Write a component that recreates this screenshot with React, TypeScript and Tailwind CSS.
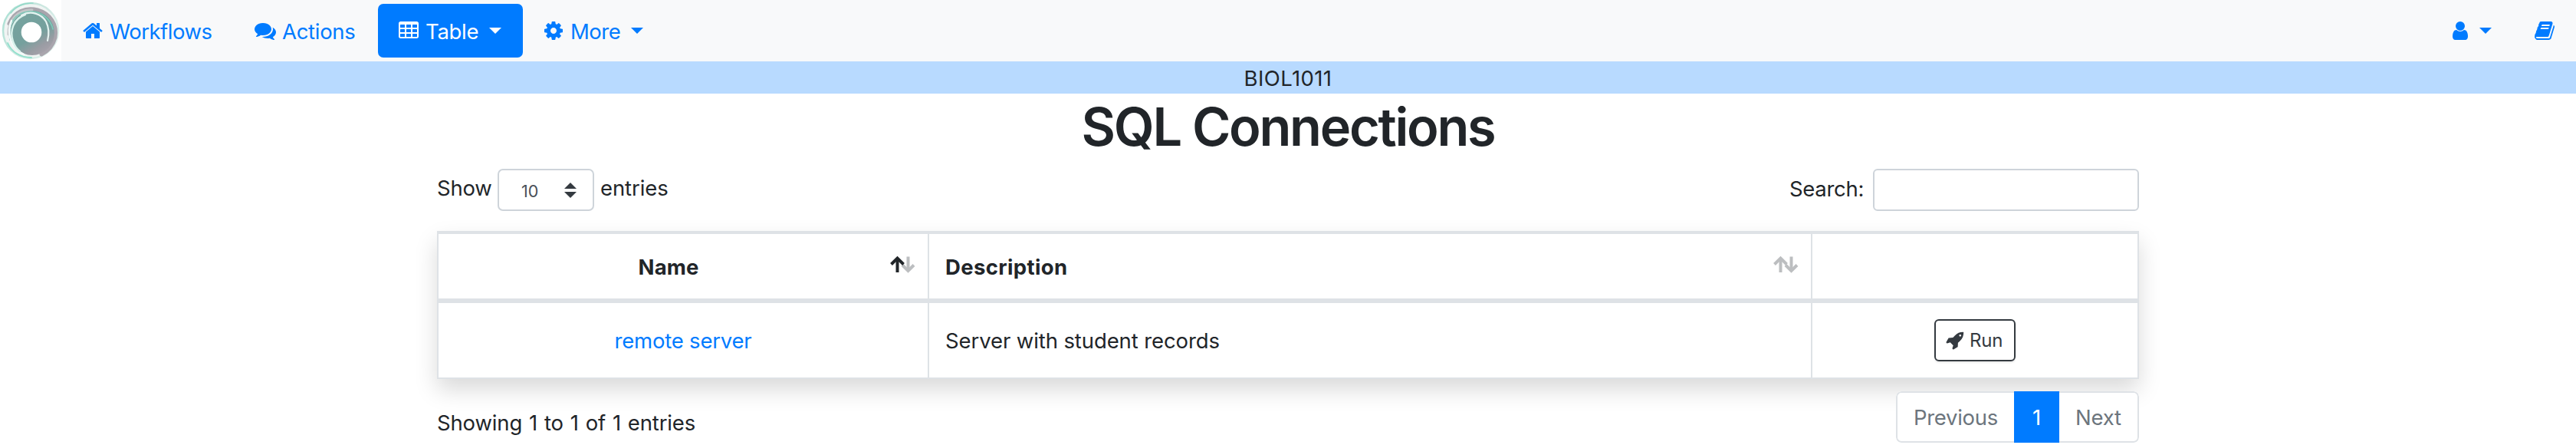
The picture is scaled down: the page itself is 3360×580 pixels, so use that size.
import type { ReactNode } from "react";

const PATHS = {
  home: "M1472 992v480q0 26-19 45t-45 19h-384v-384h-256v384h-384q-26 0-45-19t-19-45v-480q0-1 .5-3t.5-3l575-474 575 474q1 2 1 6zm223-69l-62 74q-8 9-21 11h-3q-13 0-21-7l-692-577-692 577q-12 8-24 7-13-2-21-11l-62-74q-8-10-7-23.5t11-21.5l719-599q32-26 76-26t76 26l244 204v-195q0-14 9-23t23-9h192q14 0 23 9t9 23v408l219 182q10 8 11 21.5t-7 23.5z",
  comments:
    "M1408 768q0 139-94 257t-256.5 186.5-353.5 68.5q-86 0-176-16-124 88-278 128-36 9-86 16h-3q-11 0-20.5-8t-11.5-21q-1-3-1-6.5t.5-6.5 2-6l2.5-5 3.5-5.5 4-5 4.5-5 4-4.5q5-6 23-25t26-29.5 22.5-29 25-38.5 20.5-44q-124-72-195-177t-71-224q0-139 94-257t256.5-186.5 353.5-68.5 353.5 68.5 256.5 186.5 94 257zm384 256q0 120-71 224.5t-195 176.5q10 24 20.5 44t25 38.5 22.5 29 26 29.5 23 25q1 1 4 4.5t4.5 5 4 5 3.5 5.5l2.5 5 2 6 .5 6.5-1 6.5q-3 14-13 22t-22 7q-50-7-86-16-154-40-278-128-90 16-176 16-271 0-472-132 58 4 88 4 161 0 309-45t264-129q125-92 192-212t67-254q0-77-23-152 129 71 204 178t75 230z",
  table:
    "M224 128h1344q66 0 113 47t47 113v1088q0 66-47 113t-113 47h-1344q-66 0-113-47t-47-113v-1088q0-66 47-113t113-47zM192 416v192q0 32 32 32h320q32 0 32-32v-192q0-32-32-32h-320q-32 0-32 32zM704 416v192q0 32 32 32h320q32 0 32-32v-192q0-32-32-32h-320q-32 0-32 32zM1216 416v192q0 32 32 32h320q32 0 32-32v-192q0-32-32-32h-320q-32 0-32 32zM192 800v192q0 32 32 32h320q32 0 32-32v-192q0-32-32-32h-320q-32 0-32 32zM704 800v192q0 32 32 32h320q32 0 32-32v-192q0-32-32-32h-320q-32 0-32 32zM1216 800v192q0 32 32 32h320q32 0 32-32v-192q0-32-32-32h-320q-32 0-32 32zM192 1184v192q0 32 32 32h320q32 0 32-32v-192q0-32-32-32h-320q-32 0-32 32zM704 1184v192q0 32 32 32h320q32 0 32-32v-192q0-32-32-32h-320q-32 0-32 32zM1216 1184v192q0 32 32 32h320q32 0 32-32v-192q0-32-32-32h-320q-32 0-32 32z",
  cog: "M1152 896q0-106-75-181t-181-75-181 75-75 181 75 181 181 75 181-75 75-181zm512-109v222q0 12-8 23t-20 13l-185 28q-19 54-39 91 35 50 107 138 10 12 10 25t-9 23q-27 37-99 108t-94 71q-12 0-26-9l-138-108q-44 23-91 38-16 136-29 186-7 28-36 28h-222q-14 0-24.5-8.5t-11.5-21.5l-28-184q-49-16-90-37l-141 107q-10 9-25 9-14 0-25-11-126-114-165-168-7-10-7-23 0-12 8-23 15-21 51-66.5t54-70.5q-27-50-41-99l-183-27q-13-2-21-12.5t-8-23.5v-222q0-12 8-23t19-13l186-28q14-46 39-92-40-57-107-138-10-12-10-24 0-10 9-23 26-36 98.5-107.5t94.5-71.5q13 0 26 10l138 107q44-23 91-38 16-136 29-186 7-28 36-28h222q14 0 24.5 8.5t11.5 21.5l28 184q49 16 90 37l142-107q9-9 24-9 13 0 25 10 129 119 165 170 7 8 7 22 0 12-8 23-15 21-51 66.5t-54 70.5q26 50 41 98l183 28q13 2 21 12.5t8 23.5z",
  user: "M1536 1399q0 109-62.5 187t-150.5 78h-854q-88 0-150.5-78t-62.5-187q0-85 8.5-160.5t31.5-152 58.5-131 94-89 134.5-34.5q131 128 313 128t313-128q76 0 134.5 34.5t94 89 58.5 131 31.5 152 8.5 160.5zm-256-887q0 159-112.5 271.5t-271.5 112.5-271.5-112.5-112.5-271.5 112.5-271.5 271.5-112.5 271.5 112.5 112.5 271.5z",
  book: "M1703 478q40 57 18 129l-275 906q-19 64-76.5 107.5t-122.5 43.5h-923q-77 0-148.5-53.5t-99.5-131.5q-24-67-2-127 0-4 3-27t4-37q1-8-3-21.5t-3-19.5q2-11 8-21t16.5-23.5 16.5-23.5q23-38 45-91.5t30-91.5q3-10 .5-30t-.5-28q3-11 17-28t17-23q21-36 42-92t25-90q1-9-2.500-32t.5-28q4-13 22-30.5t22-22.5q19-26 42.5-84.5t27.5-96.5q1-8-3-25.5t-2-26.500q2-8 9-18t18-23 17-21q8-12 16.5-30.5t15-35 16-36 19.5-32 26.5-23.5 36-11.5 47.5 5.5l-1 3q38-9 51-9h761q74 0 114 56t18 130l-274 906q-36 119-71.5 153.5t-128.500 34.5h-869q-27 0-38 15-11 16-1 43 24 70 144 70h923q29 0 56-15.5t35-41.5l300-987q7-22 5-57 38 15 59 43zm-1064 2q-4 13 2 22.5t20 9.5h608q13 0 25.5-9.5t16.5-22.5l21-64q4-13-2-22.5t-20-9.5h-608q-13 0-25.5 9.5t-16.5 22.5zm-83 256q-4 13 2 22.5t20 9.5h608q13 0 25.5-9.5t16.5-22.5l21-64q4-13-2-22.5t-20-9.5h-608q-13 0-25.5 9.5t-16.5 22.5z",
  rocket:
    "M1440 448q0-40-28-68t-68-28-68 28-28 68 28 68 68 28 68-28 28-68zm224-288q0 249-75.5 430.5t-253.5 360.5q-81 80-195 176l-20 379q-2 16-16 26l-384 224q-7 4-16 4-12 0-23-9l-64-64q-13-14-8-32l85-276-281-281-276 85q-3 1-9 1-14 0-23-9l-64-64q-17-19-5-39l224-384q10-14 26-16l379-20q96-114 176-195 188-187 358-258t431-71q14 0 24 9.5t10 22.5z",
};

function Icon({ name, className = "size-7" }: { name: keyof typeof PATHS; className?: string }) {
  return (
    <svg viewBox="0 0 1792 1792" fill="currentColor" fillRule={name === "table" ? "evenodd" : "nonzero"} className={`shrink-0 ${className}`}>
      <path d={PATHS[name]} />
    </svg>
  );
}

function Caret({ className = "" }: { className?: string }) {
  return (
    <svg viewBox="0 0 16 8" fill="currentColor" className={`h-2 w-4 shrink-0 ${className}`}>
      <path d="M0 0h16l-8 8z" />
    </svg>
  );
}

function Logo() {
  return (
    <svg viewBox="0 0 80 80" className="size-20 shrink-0 bg-white">
      <defs>
        <linearGradient id="disc" x1="0.2" y1="0.1" x2="0.75" y2="1">
          <stop offset="0" stopColor="#76a39f" />
          <stop offset="0.55" stopColor="#74a09d" />
          <stop offset="0.8" stopColor="#999ca3" />
          <stop offset="1" stopColor="#a9a2ac" />
        </linearGradient>
        <linearGradient id="rim" x1="0" y1="0" x2="1" y2="0.6">
          <stop offset="0" stopColor="#a5e0d2" />
          <stop offset="0.5" stopColor="#c9e6df" />
          <stop offset="1" stopColor="#dff0ec" />
        </linearGradient>
        <filter id="soft">
          <feGaussianBlur stdDeviation="0.7" />
        </filter>
      </defs>
      <g filter="url(#soft)" fill="none" strokeLinecap="round">
        <circle cx="40" cy="40" r="36" fill="#f0f4f3" stroke="url(#rim)" strokeWidth="2.5" />
        <path d="M12 31C18 15 34 9 49 13C66 18 75 32 72 49C69 60 62 67 54 71" stroke="#a9a5ad" strokeWidth="5" />
        <circle cx="42" cy="43" r="29" fill="url(#disc)" />
        <path d="M11 45C10 26 24 12 42 13" stroke="#c3c6c8" strokeWidth="3" />
        <path d="M13 52C9 30 21 16 38 15C54 14 66 25 69 38" stroke="#7fc9b9" strokeWidth="1.6" />
        <path d="M15 27C8 43 14 63 31 71" stroke="#f4fbfa" strokeWidth="2.5" />
        <path d="M33 19C18 24 12 40 17 54C19 60 22 64 26 67" stroke="#d9f2ec" strokeWidth="2.4" />
        <path d="M28 20C40 13 54 18 60 28C64 36 64 45 62 53" stroke="#e5f3f1" strokeWidth="2.2" />
        <path d="M10 56C15 68 27 75 41 75" stroke="#8fe0cc" strokeWidth="1.8" />
        <path d="M14 17C21 8 31 4 43 4" stroke="#94d9c8" strokeWidth="1.6" />
        <circle cx="41" cy="42" r="13.3" fill="#fff" />
      </g>
    </svg>
  );
}

function SortArrows({ up }: { up: string }) {
  return (
    <svg viewBox="0 0 34 24" fill="none" strokeWidth="4" className="h-6 w-[34px] shrink-0">
      <g stroke="#bcbec0">
        <path d="M24.5 1.5V20" />
        <path d="M17 12.5L24.5 20L32 12.5" />
      </g>
      <g stroke={up}>
        <path d="M10.5 22V4" />
        <path d="M2.5 11.5L10.5 3.5L18.5 11.5" />
      </g>
    </svg>
  );
}

function Label({ className, children }: { className: string; children: ReactNode }) {
  return <span className={`whitespace-nowrap ${className}`}>{children}</span>;
}

export default function App() {
  return (
    <div className="h-[580px] w-[3360px] overflow-hidden bg-white font-['Inter',sans-serif] text-[27.5px] leading-[42px] font-[430] text-[#212529]">
      <nav className="flex h-20 items-center bg-[#f8f9fa] text-[#007bff]">
        <Logo />
        <a className="ml-[27px] flex w-[225px] items-center">
          <Icon name="home" />
          <Label className="ml-2 pt-[2px] tracking-[-0.5px]">Workflows</Label>
        </a>
        <a className="flex w-[161px] items-center">
          <Icon name="comments" />
          <Label className="ml-2 pt-[2px] tracking-[-0.3px]">Actions</Label>
        </a>
        <a className="flex h-[70px] w-[189px] items-center rounded-[7px] bg-[#007bff] pl-[26px] text-white">
          <Icon name="table" />
          <Label className="ml-2 w-[68px] pt-[2px] tracking-[-0.3px]">Table</Label>
          <Caret className="ml-[15px]" />
        </a>
        <a className="ml-[26px] flex items-center">
          <Icon name="cog" />
          <Label className="ml-2 w-[64px] pt-[2px] tracking-[-0.5px]">More</Label>
          <Caret className="ml-[15px]" />
        </a>
        <div className="ml-auto flex items-center pr-[27px]">
          <Icon name="user" />
          <Caret className="ml-[11px]" />
          <Icon name="book" className="ml-[55px] size-7" />
        </div>
      </nav>

      <div className="h-[42px] bg-[#b8daff] pt-px text-center tracking-[0.4px]">BIOL1011</div>

      <main className="mx-auto w-[2220px]">
        <h1 className="h-[98px] pt-[2px] text-center text-[68.5px] leading-[84px] font-[560] tracking-[-2.3px]">SQL Connections</h1>

        <div className="flex h-[55px] items-center justify-between">
          <div className="flex items-center">
            <Label className="w-[79px] pb-[5px] tracking-[-0.2px]">Show</Label>
            <div className="flex h-[55px] w-[126px] items-center justify-between rounded-[7px] border-2 border-[#ced4da] pr-[21px] pl-[29px] text-[#495057]">
              <Label className="pt-[2px] text-[21.5px]">10</Label>
              <svg viewBox="0 0 16 20" fill="#343a40" className="h-5 w-4">
                <path d="M0 8h16L8 0zM0 12h16L8 20z" />
              </svg>
            </div>
            <Label className="ml-2 pb-[5px] tracking-[-0.1px]">entries</Label>
          </div>
          <label className="flex items-center">
            <Label className="mr-3 pb-[3px] tracking-[-0.3px]">Search:</Label>
            <input className="h-[55px] w-[347px] rounded-[6px] border-2 border-[#ced4da] bg-white" />
          </label>
        </div>

        <table className="mt-[26px] w-[2220px] table-fixed border-separate border-spacing-0 border-2 border-t-4 border-[#dee2e6] bg-white shadow-[0_14px_28px_rgba(0,0,0,0.15)]">
          <colgroup>
            <col className="w-[640px]" />
            <col className="w-[1152px]" />
            <col className="w-[424px]" />
          </colgroup>
          <thead>
            <tr className="h-[90px]">
              <th className="border-r-2 border-b-6 border-[#dee2e6] p-0 font-bold">
                <div className="flex items-center">
                  <Label className="flex-1 pt-[2px] pl-3 tracking-[0.1px]">Name</Label>
                  <div className="mr-4 -mt-1">
                    <SortArrows up="#212529" />
                  </div>
                </div>
              </th>
              <th className="border-r-2 border-b-6 border-[#dee2e6] p-0 text-left font-bold">
                <div className="flex items-center">
                  <Label className="flex-1 pt-[2px] pl-[21px] tracking-[0.35px]">Description</Label>
                  <div className="mr-4 -mt-1">
                    <SortArrows up="#bcbec0" />
                  </div>
                </div>
              </th>
              <th className="border-b-6 border-[#dee2e6] p-0" />
            </tr>
          </thead>
          <tbody>
            <tr className="h-[97px]">
              <td className="border-r-2 border-[#dee2e6] p-0 pt-px text-center text-[#007bff]">
                <Label className="tracking-[-0.2px]">remote server</Label>
              </td>
              <td className="border-r-2 border-[#dee2e6] p-0 pt-px pl-[21px]">
                <Label className="tracking-[-0.1px]">Server with student records</Label>
              </td>
              <td className="p-0">
                <button className="mx-auto flex h-[55px] w-[106px] items-center rounded-[6px] border-2 border-[#343a40] pl-[13px] text-[24px] text-[#343a40] shadow-[0_2px_2px_rgba(0,0,0,0.08)]">
                  <Icon name="rocket" className="size-[25px]" />
                  <Label className="ml-[6px] tracking-[-0.2px]">Run</Label>
                </button>
              </td>
            </tr>
          </tbody>
        </table>

        <div className="relative flex justify-between pt-4">
          <Label className="pt-5 tracking-[-0.15px] [word-spacing:1.3px]">Showing 1 to 1 of 1 entries</Label>
          <div className="flex h-[67px] w-[317px] items-stretch overflow-hidden rounded-[7px] bg-white leading-[67px] text-[#6c757d]">
            <div className="w-[154px] rounded-l-[7px] border-2 border-r-0 border-[#dee2e6] pl-[21px] leading-[64px]">
              <Label className="tracking-[-0.3px]">Previous</Label>
            </div>
            <div className="w-[59px] bg-[#007bff] text-center leading-[68px] text-white">1</div>
            <div className="w-[104px] rounded-r-[7px] border-2 border-l-0 border-[#dee2e6] pl-[21px] leading-[64px]">
              <Label className="tracking-[-0.2px]">Next</Label>
            </div>
          </div>
        </div>
      </main>
    </div>
  );
}
